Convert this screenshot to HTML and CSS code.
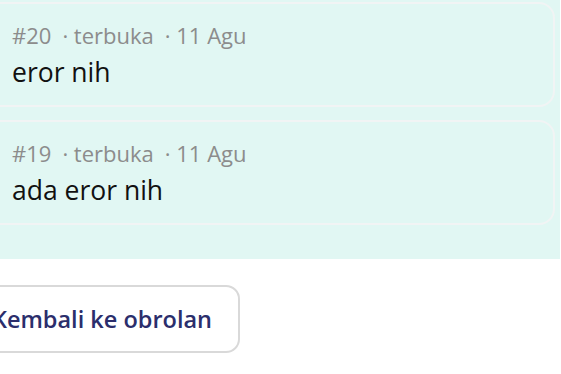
FILE: index.html
```html
<!DOCTYPE html>
<html>
<head>
<meta charset="utf-8">
<link rel="stylesheet" href="styles.css">
</head>
<body>
<div class="panel">
  <div class="card">
    <div class="meta"><span>#20</span><span class="sep">· terbuka</span><span class="sep">· 11 Agu</span></div>
    <div class="title">eror nih</div>
  </div>
  <div class="card">
    <div class="meta"><span>#19</span><span class="sep">· terbuka</span><span class="sep">· 11 Agu</span></div>
    <div class="title">ada eror nih</div>
  </div>
</div>
<div class="actions">
  <button class="back">Kembali ke obrolan</button>
</div>
</body>
</html>
```
FILE: styles.css
```css
html, body {
  margin: 0;
  padding: 0;
  background: #ffffff;
  font-family: "Open Sans", "Noto Sans", sans-serif;
  overflow: hidden;
}
.panel {
  background: #e1f7f3;
  margin: -20px 1px 0 -30px;
  padding: 22px 5px 34px 0;
  display: flex;
  flex-direction: column;
  gap: 13px;
}
.card {
  border: 2px solid #f1f4f4;
  border-radius: 16px;
  height: 105px;
  box-sizing: border-box;
  padding: 16px 0 0 40px;
}
.meta {
  color: #8c8c8c;
  font-size: 22px;
  line-height: 30px;
}
.sep {
  margin-left: 11px;
}
.title {
  color: #111;
  font-size: 26.5px;
  line-height: 44px;
}
.actions {
  padding-top: 26px;
}
.back {
  margin-left: -30px;
  height: 68px;
  width: 270px;
  box-sizing: border-box;
  border: 2px solid #d9d9d9;
  border-radius: 14px;
  background: #fff;
  color: #2b2e6c;
  font-family: "Open Sans", sans-serif;
  font-weight: 600;
  font-size: 23.5px;
  text-align: right;
  padding: 0 26px 0 0;
}
```
